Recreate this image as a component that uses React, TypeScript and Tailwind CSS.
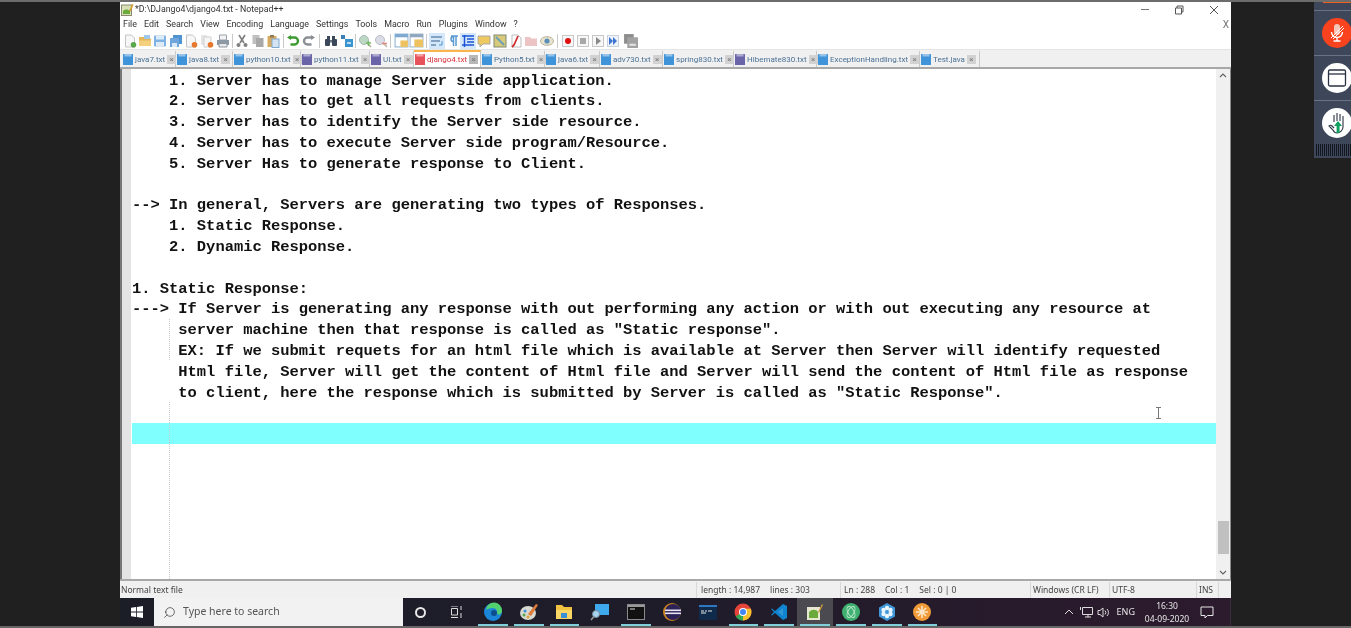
import type { ReactNode } from 'react'
import { Search } from 'lucide-react'

const MENUS = ['File', 'Edit', 'Search', 'View', 'Encoding', 'Language', 'Settings', 'Tools', 'Macro', 'Run', 'Plugins', 'Window', '?']

const TABS = [
  { name: 'java7.txt', w: 'w-[54px]', color: '#3f93d8' },
  { name: 'java8.txt', w: 'w-[57px]', color: '#3f93d8' },
  { name: 'python10.txt', w: 'w-[68px]', color: '#3f93d8' },
  { name: 'python11.txt', w: 'w-[69px]', color: '#6a64a8' },
  { name: 'UI.txt', w: 'w-[44px]', color: '#6a64a8' },
  { name: 'django4.txt', w: 'w-[67px]', color: '#e8525a', active: true },
  { name: 'Python5.txt', w: 'w-[64px]', color: '#3f93d8' },
  { name: 'java6.txt', w: 'w-[55px]', color: '#3f93d8' },
  { name: 'adv730.txt', w: 'w-[63px]', color: '#3f93d8' },
  { name: 'spring830.txt', w: 'w-[71px]', color: '#3f93d8' },
  { name: 'Hibernate830.txt', w: 'w-[83px]', color: '#6a64a8' },
  { name: 'ExceptionHandling.txt', w: 'w-[103px]', color: '#3f93d8' },
  { name: 'Test.java', w: 'w-[60px]', color: '#3f93d8' },
]

const LINES = [
  '    1. Server has to manage Server side application.',
  '    2. Server has to get all requests from clients.',
  '    3. Server has to identify the Server side resource.',
  '    4. Server has to execute Server side program/Resource.',
  '    5. Server Has to generate response to Client.',
  '',
  '--> In general, Servers are generating two types of Responses.',
  '    1. Static Response.',
  '    2. Dynamic Response.',
  '',
  '1. Static Response:',
  '---> If Server is generating any response with out performing any action or with out executing any resource at',
  '     server machine then that response is called as "Static response".',
  '     EX: If we submit requets for an html file which is available at Server then Server will identify requested',
  '     Html file, Server will get the content of Html file and Server will send the content of Html file as response',
  '     to client, here the response which is submitted by Server is called as "Static Response".',
  '',
]

function Ico({ children, size = 14 }: { children: ReactNode; size?: number }) {
  return (
    <svg width={size} height={size} viewBox="0 0 14 14" className="shrink-0">
      {children}
    </svg>
  )
}

const Doc = ({ badge }: { badge?: string }) => (
  <>
    <path d="M2.5 1h6l3 3v9h-9z" fill="#f7f7f7" stroke="#c4c4c4" />
    {badge && <circle cx="10.5" cy="10.8" r="2.8" fill={badge} />}
  </>
)

const Floppy = ({ x = 1, c = '#7fb2e4' }: { x?: number; c?: string }) => (
  <>
    <rect x={x} y="1.5" width="12" height="11" rx="1" fill={c} />
    <rect x={x + 2} y="1.5" width="8" height="4" fill="#dcebf8" />
    <rect x={x + 2} y="8" width="8" height="4.5" fill="#ffffff" opacity="0.75" />
  </>
)

const TOOLBAR: Record<string, ReactNode> = {
  new: <Ico><Doc badge="#58a84a" /></Ico>,
  open: <Ico><path d="M1 3h5l1 1.5h6V12H1z" fill="#e7b85a" /><path d="M6 1h6v4H6z" fill="#9cc6ea" /><path d="M1 6.5h12V12H1z" fill="#f3cf7e" /></Ico>,
  save: <Ico><Floppy /></Ico>,
  saveAll: <Ico><rect x="4" y="1" width="9" height="9" fill="#4f93d0" /><rect x="1" y="4" width="9" height="9" fill="#6ea6dc" /><rect x="3" y="9" width="5" height="4" fill="#dbe9f6" /></Ico>,
  close: <Ico><Doc badge="#e8772e" /></Ico>,
  closeAll: <Ico><path d="M1 1h6v10H1z" fill="#e5e5e5" /><path d="M4 3h7v10H4z" fill="#f6f6f6" stroke="#cfcfcf" /><circle cx="10.5" cy="10.8" r="2.8" fill="#e8772e" /></Ico>,
  print: <Ico><path d="M3.5 1h7v5h-7z" fill="#f3f3f3" stroke="#9aa3ad" /><path d="M1 6h12v5H1z" fill="#8d98a5" /><path d="M3 9.5h8V13H3z" fill="#e8e8e8" stroke="#8d98a5" /></Ico>,
  cut: <Ico><path d="M4 1l5 8M10 1L5 9" stroke="#808080" strokeWidth="1.7" fill="none" /><circle cx="3.5" cy="11" r="2" fill="#808080" /><circle cx="10.5" cy="11" r="2" fill="#808080" /></Ico>,
  copy: <Ico><rect x="1.5" y="1" width="7" height="9" fill="#c0c0c0" /><rect x="5" y="4" width="7.5" height="9" fill="#a8a8a8" /></Ico>,
  paste: <Ico><rect x="1.5" y="2" width="9" height="11" fill="#d8ab62" /><rect x="4" y="1" width="4" height="2.5" fill="#8f7a55" /><rect x="6" y="5" width="7" height="8.5" fill="#d5e4f3" stroke="#7fa8cf" /></Ico>,
  undo: <Ico><path d="M3 3.5h5.5a3 3 0 0 1 0 7H4.5" fill="none" stroke="#3d9a32" strokeWidth="2.4" /><path d="M5 1v5L1 3.5z" fill="#3d9a32" /></Ico>,
  redo: <Ico><path d="M11 3.5H5.5a3 3 0 0 0 0 7h4" fill="none" stroke="#8a8f94" strokeWidth="2.4" /><path d="M9 1v5l4-2.5z" fill="#8a8f94" /></Ico>,
  find: <Ico><rect x="1" y="5" width="5" height="7" rx="1" fill="#3a4859" /><rect x="8" y="5" width="5" height="7" rx="1" fill="#3a4859" /><rect x="3" y="2" width="3" height="4" fill="#3a4859" /><rect x="8" y="2" width="3" height="4" fill="#3a4859" /><rect x="6" y="6" width="2" height="2.5" fill="#6a7786" /></Ico>,
  replace: <Ico><path d="M1 1h4v4H1z" fill="#3b7fb8" /><path d="M5 5h8v8H5z" fill="#3a94cf" /><path d="M7 8h4v2H7z" fill="#b9dcf3" /></Ico>,
  zoomIn: <Ico><circle cx="6" cy="6" r="4.5" fill="#bcd8c4" stroke="#a8bdb8" /><path d="M9 9l4 4" stroke="#a8ab90" strokeWidth="1.5" /><path d="M8 9h5M10.5 7v5" stroke="#74b868" strokeWidth="1.4" /></Ico>,
  zoomOut: <Ico><circle cx="6" cy="6" r="4.5" fill="#dcdce6" stroke="#bcbcc8" /><path d="M9 9l4 4" stroke="#bcb2a5" strokeWidth="1.5" /><path d="M8 9.5h5" stroke="#e0857a" strokeWidth="1.6" /></Ico>,
  sync1: <Ico size={15}><rect x="1" y="1" width="12" height="12" fill="#fff" stroke="#8eb2d2" /><rect x="1" y="1" width="12" height="3" fill="#7eaad2" /><rect x="6" y="7" width="7" height="6" fill="#eec25f" /></Ico>,
  sync2: <Ico size={15}><rect x="1" y="1" width="12" height="12" fill="#fff" stroke="#9fb5c8" /><rect x="1" y="1" width="12" height="3" fill="#8fa8bf" /><rect x="5" y="6" width="8" height="7" fill="#eec25f" /></Ico>,
  wrap: <Ico><path d="M1 3h11M1 7h9M1 11h5" stroke="#6a8cb0" strokeWidth="1.6" fill="none" /><path d="M12 7v4H9" stroke="#4f93d0" fill="none" /></Ico>,
  para: <Ico><path d="M5 2h7M7.5 2v10M10 2v10M7.5 2.5a2.4 2.4 0 0 0 0 5" stroke="#5a9ad2" strokeWidth="1.5" fill="none" /></Ico>,
  indent: <Ico><path d="M1 2h12M6 5h7M6 8h7M1 11h12" stroke="#1b54d6" strokeWidth="1.3" /><path d="M3.5 1v12" stroke="#1b54d6" strokeWidth="1.5" /></Ico>,
  note: <Ico><path d="M1 2h12v8H6l-3 3v-3H1z" fill="#f0c860" stroke="#a9a9a9" /></Ico>,
  map: <Ico><rect x="1" y="1" width="12" height="12" fill="#d9c97b" stroke="#7e8a70" /><path d="M3 3l8 8" stroke="#6ca0b8" strokeWidth="2" /></Ico>,
  fn: <Ico><path d="M3 1h6l3 3v9H3z" fill="#fff" stroke="#bdbdbd" /><path d="M9 2L5 11l-2 2" stroke="#cf3030" strokeWidth="1.8" fill="none" /></Ico>,
  folder: <Ico><path d="M1 3h5l1 1.5h6V12H1z" fill="#ecc4c4" /></Ico>,
  eye: <Ico><ellipse cx="7" cy="7" rx="6.5" ry="4.3" fill="#e9e4cf" stroke="#b8b09a" /><circle cx="7" cy="7" r="2.6" fill="#5a8fb8" /></Ico>,
  rec: <Ico><rect x="1.5" y="1.5" width="11" height="11" fill="#f7f7f7" stroke="#c8c8c8" /><circle cx="7" cy="7" r="3" fill="#e01010" /></Ico>,
  stop: <Ico><rect x="1.5" y="1.5" width="11" height="11" fill="#f7f7f7" stroke="#c8c8c8" /><rect x="4" y="4" width="6" height="6" fill="#a8a8a8" /></Ico>,
  play: <Ico><rect x="1.5" y="1.5" width="11" height="11" fill="#f7f7f7" stroke="#c8c8c8" /><path d="M5 3l5 4-5 4z" fill="#8a8a8a" /></Ico>,
  playN: <Ico><rect x="1.5" y="1.5" width="11" height="11" fill="#eef3fa" stroke="#c8d2e0" /><path d="M3 3l4 4-4 4zM7 3l4 4-4 4z" fill="#3d74d0" /></Ico>,
  saveMacro: <Ico size={15}><rect x="1" y="1" width="9" height="9" fill="#8d8d8d" /><rect x="4" y="4" width="10" height="10" fill="#a2a2a2" /><rect x="6" y="10" width="6" height="2" fill="#e2e2e2" /></Ico>,
}

// sep entries are thin dividers with the margin written out, on = pressed state with a pale blue box
type ToolItem = { id: string; w: string; on?: boolean } | { sep: string }

const TOOLBAR_ROW: ToolItem[] = [
  { id: 'new', w: 'w-[15px]' }, { id: 'open', w: 'w-[15px]' }, { id: 'save', w: 'w-[16px]' }, { id: 'saveAll', w: 'w-[15px]' },
  { id: 'close', w: 'w-[16px]' }, { id: 'closeAll', w: 'w-[16px]' }, { id: 'print', w: 'w-[15px]' }, { sep: 'mx-[1.5px]' },
  { id: 'cut', w: 'w-[16px]' }, { id: 'copy', w: 'w-[15px]' }, { id: 'paste', w: 'w-[16px]' }, { sep: 'mx-[1.5px]' },
  { id: 'undo', w: 'w-[16px]' }, { id: 'redo', w: 'w-[15px]' }, { sep: 'mx-[3px]' },
  { id: 'find', w: 'w-[16px]' }, { id: 'replace', w: 'w-[15px]' }, { sep: 'mx-[1px]' },
  { id: 'zoomIn', w: 'w-[16px]' }, { id: 'zoomOut', w: 'w-[15px]' }, { sep: 'mx-[2px]' },
  { id: 'sync1', w: 'w-[16px]' }, { id: 'sync2', w: 'w-[15px]' }, { sep: 'mx-[2px]' },
  { id: 'wrap', w: 'w-[16px]', on: true }, { id: 'para', w: 'w-[15px]' }, { id: 'indent', w: 'w-[16px]', on: true },
  { id: 'note', w: 'w-[16px]' }, { id: 'map', w: 'w-[16px]' }, { id: 'fn', w: 'w-[15px]' }, { id: 'folder', w: 'w-[16px]' }, { id: 'eye', w: 'w-[16px]' }, { sep: 'mx-[2px]' },
  { id: 'rec', w: 'w-[15px]' }, { id: 'stop', w: 'w-[15px]' }, { id: 'play', w: 'w-[15px]' }, { id: 'playN', w: 'w-[16px]' }, { id: 'saveMacro', w: 'w-[18px]' },
]

const TASK_ICONS: { id: string; open: boolean }[] = [
  { id: 'edge', open: true }, { id: 'paint', open: true }, { id: 'files', open: true }, { id: 'search', open: false },
  { id: 'term', open: true }, { id: 'eclipse', open: false }, { id: 'cmd', open: false }, { id: 'chrome', open: true },
  { id: 'vscode', open: true }, { id: 'npp', open: true }, { id: 'atom', open: true }, { id: 'snow', open: true }, { id: 'orange', open: true },
]

function TaskGlyph({ id }: { id: string }) {
  switch (id) {
    case 'edge':
      return (
        <svg width="20" height="20" viewBox="0 0 20 20">
          <circle cx="10" cy="10" r="9" fill="#1b86d8" />
          <path d="M3 8a8 8 0 0 1 16 1c0 3-3 4-5 3 1-3-1-6-4-6S4 7 3 8z" fill="#53d06f" />
          <circle cx="11" cy="11" r="3" fill="#0d4f8c" />
        </svg>
      )
    case 'paint':
      return (
        <svg width="20" height="20" viewBox="0 0 20 20">
          <ellipse cx="9" cy="11" rx="8" ry="7" fill="#d8d8d0" />
          <circle cx="6" cy="9" r="1.5" fill="#3a8fd8" />
          <circle cx="5" cy="13" r="1.5" fill="#58a84a" />
          <circle cx="9" cy="15" r="1.4" fill="#e0a030" />
          <path d="M9 12L17 2l2 1-7 11z" fill="#e07a38" />
        </svg>
      )
    case 'files':
      return (
        <svg width="18" height="18" viewBox="0 0 18 18">
          <path d="M1 2h6l2 2h8v12H1z" fill="#f2c243" />
          <rect x="1" y="7" width="16" height="9" fill="#fbd768" />
          <rect x="6" y="10" width="6" height="5" fill="#3a8fd8" />
        </svg>
      )
    case 'search':
      return (
        <svg width="20" height="20" viewBox="0 0 20 20">
          <rect x="5" y="2" width="14" height="11" fill="#3fa9ee" />
          <circle cx="6" cy="12" r="3.5" fill="#a8d4f0" stroke="#7a8a98" />
          <path d="M3.5 15L1 18" stroke="#9a9a9a" strokeWidth="1.5" />
        </svg>
      )
    case 'term':
      return (
        <svg width="18" height="16" viewBox="0 0 18 16">
          <rect x="0.5" y="0.5" width="17" height="15" fill="#111" stroke="#8a8a8a" />
          <rect x="1" y="1" width="16" height="2" fill="#999" />
          <path d="M3 5h5" stroke="#ddd" />
        </svg>
      )
    case 'eclipse':
      return (
        <svg width="20" height="20" viewBox="0 0 20 20">
          <circle cx="10" cy="10" r="9" fill="#c9841f" />
          <circle cx="11" cy="10" r="8" fill="#2c2255" />
          <rect x="3" y="7.5" width="16" height="1.6" fill="#e8e4f4" />
          <rect x="3" y="10.5" width="16" height="1.6" fill="#e8e4f4" />
        </svg>
      )
    case 'cmd':
      return (
        <svg width="18" height="15" viewBox="0 0 18 15">
          <rect width="18" height="15" fill="#0f2a4a" />
          <rect width="18" height="2" fill="#2f78c0" />
          <path d="M2 6h3M6 6h2M9 6h4M2 8h5" stroke="#e8e8e8" />
        </svg>
      )
    case 'chrome':
      return (
        <svg width="18" height="18" viewBox="0 0 18 18">
          <circle cx="9" cy="9" r="8.5" fill="#e5443a" />
          <path d="M9 9L1.7 13.3A8.5 8.5 0 0 0 9 17.5z" fill="#34a853" />
          <path d="M9 17.5a8.5 8.5 0 0 0 7.8-11.8H9z" fill="#f5c02e" />
          <circle cx="9" cy="9" r="4" fill="#fff" />
          <circle cx="9" cy="9" r="3" fill="#4285f4" />
        </svg>
      )
    case 'vscode':
      return (
        <svg width="18" height="18" viewBox="0 0 18 18">
          <path d="M13 1l4 2v12l-4 2-8-7-3 2.5L1 12l3-3-3-3 1-.5L5 8z" fill="#0f84d0" />
          <path d="M13 5L8 9l5 4z" fill="#fff" opacity="0.15" />
        </svg>
      )
    case 'npp':
      return (
        <svg width="18" height="18" viewBox="0 0 18 18">
          <rect x="1" y="4" width="13" height="13" fill="#e8e8d0" />
          <path d="M3 9c3-3 7-3 9 0v6H3z" fill="#6aaa3a" />
          <path d="M12 9l4-8 1 1-4 8z" fill="#c89a3a" />
        </svg>
      )
    case 'atom':
      return (
        <svg width="18" height="18" viewBox="0 0 18 18">
          <circle cx="9" cy="9" r="9" fill="#3fb070" />
          <ellipse cx="9" cy="9" rx="6" ry="3" fill="none" stroke="#bde8cf" transform="rotate(60 9 9)" />
          <ellipse cx="9" cy="9" rx="6" ry="3" fill="none" stroke="#bde8cf" transform="rotate(-60 9 9)" />
        </svg>
      )
    case 'snow':
      return (
        <svg width="18" height="18" viewBox="0 0 18 18">
          <path d="M9 0l8 4.5v9L9 18l-8-4.5v-9z" fill="#3f96d8" />
          <circle cx="9" cy="5" r="2.2" fill="#eaf5fc" />
          <circle cx="9" cy="13" r="2.2" fill="#eaf5fc" />
          <circle cx="5.5" cy="7" r="2.2" fill="#eaf5fc" />
          <circle cx="12.5" cy="7" r="2.2" fill="#eaf5fc" />
          <circle cx="5.5" cy="11" r="2.2" fill="#eaf5fc" />
          <circle cx="12.5" cy="11" r="2.2" fill="#eaf5fc" />
        </svg>
      )
    default:
      return (
        <svg width="18" height="18" viewBox="0 0 18 18">
          <circle cx="9" cy="9" r="9" fill="#f09a38" />
          <path d="M9 3v12M3 9h12M5 5l8 8M13 5l-8 8" stroke="#fde6c8" strokeWidth="1.6" />
        </svg>
      )
  }
}

function FileIcon({ color }: { color: string }) {
  return (
    <svg width="10" height="11" viewBox="0 0 10 11" className="shrink-0">
      <rect width="10" height="11" rx="0.5" fill={color} />
      <rect x="1.5" y="0" width="7" height="2.5" fill="#ffffff" opacity="0.45" />
    </svg>
  )
}

export default function App() {
  return (
    <div className="relative flex h-[628px] w-[1351px] flex-col overflow-hidden border-t-2 border-b-2 border-t-[#6c6c6c] border-b-[#666666] bg-[#202020] pl-[120px] font-['Noto_Sans',sans-serif] blur-[0.35px]">
      <div className="flex h-full w-[1111px] flex-col bg-white">
        {/* title bar */}
        <div className="flex h-[15px] items-center pl-[1px] font-['Roboto',sans-serif] text-[8.8px] text-[#333333]">
          <svg width="13" height="13" viewBox="0 0 13 13">
            <rect x="0.5" y="2" width="10" height="10.5" fill="#d8e0b8" stroke="#8a8a70" />
            <path d="M2 8c2-2 5-2 7 0v3H2z" fill="#6aaa3a" />
            <path d="M8 8l3-7 1.5.7-3 7z" fill="#d8a030" />
          </svg>
          <span className="ml-[1px]">*D:\DJango4\django4.txt - Notepad++</span>
          <div className="ml-auto flex items-center">
            <span className="h-px w-[8px] bg-[#777777]" />
            <svg width="10" height="10" viewBox="0 0 10 10" className="ml-[25px]">
              <path d="M1.5 3h6v6h-6zM3 3V1h6v6H7.5" fill="none" stroke="#555555" />
            </svg>
            <svg width="10" height="10" viewBox="0 0 10 10" className="ml-[25px] mr-[12px]">
              <path d="M1 1l8 8M9 1l-8 8" stroke="#555555" />
            </svg>
          </div>
        </div>

        {/* menu bar */}
        <div className="flex h-[15px] items-center gap-[7px] pl-[3px] font-['Roboto',sans-serif] text-[8.9px] text-[#333333]">
          {MENUS.map(m => (
            <span key={m}>{m}</span>
          ))}
          <span className="ml-auto mr-[2px] text-[10px] text-[#777777]">X</span>
        </div>

        {/* toolbar */}
        <div className="flex h-[17px] items-center pl-[2px]">
          {TOOLBAR_ROW.map((item, i) =>
            'sep' in item ? (
              <span key={i} className={`h-[14px] w-px bg-[#c8c8c8] ${item.sep}`} />
            ) : (
              <span key={i} className={`flex h-[16px] items-center justify-center ${item.w} ${item.on ? 'bg-[#d5e8fa]' : ''}`}>
                {TOOLBAR[item.id]}
              </span>
            ),
          )}
        </div>

        {/* tabs */}
        <div className="flex h-[20px] items-end border-t border-[#e4e4e4] border-b-2 border-b-[#a8a8a8] bg-[#f0f0f0] pl-[2px] font-['Roboto',sans-serif] text-[8px]">
          {TABS.map(t => (
            <div
              key={t.name}
              className={`flex h-[17px] items-center gap-[2px] border-t-2 border-r border-r-[#c8c8c8] pl-[1px] ${t.w} ${t.active ? 'border-t-[#fab44c] bg-white text-[#d8303a]' : 'border-t-transparent text-[#4a7196]'}`}
            >
              <FileIcon color={t.color} />
              <span className="whitespace-nowrap">{t.name}</span>
              <span className={`mr-[3px] ml-auto flex h-[9px] w-[9px] shrink-0 items-center justify-center text-[8px] leading-none text-[#777777] ${t.active ? 'bg-[#b8b8b8]' : 'bg-[#d2d2d2]'}`}>×</span>
            </div>
          ))}
        </div>

        {/* editor */}
        <div className="flex min-h-0 flex-1 border-b-2 border-b-[#a8a8a8]">
          <div className="w-[11px] border-l-2 border-l-[#777777] bg-[#e4e4e4]" />
          <div className="relative ml-px flex-1 overflow-hidden pt-[0.6px] font-['Liberation_Mono',monospace] text-[15.45px] leading-[23.4px] font-bold text-[#111111]">
            {LINES.map((line, i) => (
              <div key={i} className="h-[20.8px] whitespace-pre">
                {line}
              </div>
            ))}
            <div className="h-[20.8px] bg-[#80ffff]" />

            {/* indent guides */}
            <span className="absolute top-[250px] left-[37px] h-[41px] border-l border-dotted border-[#cccccc]" />
            <span className="absolute top-[333px] left-[37px] bottom-0 border-l border-dotted border-[#cccccc]" />
            {/* mouse cursor */}
            <svg width="7" height="12" viewBox="0 0 7 12" className="absolute top-[338px] left-[1023px]">
              <path d="M1 .5h5M1 11.5h5M3.5 .5v11" stroke="#777777" fill="none" />
            </svg>
          </div>
          <div className="flex w-[15px] flex-col items-center justify-between border-r border-r-[#8a8a8a] bg-[#f0f0f0] py-[4px]">
            <svg width="8" height="5" viewBox="0 0 8 5">
              <path d="M1 4l3-3 3 3" fill="none" stroke="#666666" strokeWidth="1.2" />
            </svg>
            <div className="mt-auto mb-[16px] h-[33px] w-[11px] bg-[#c0c0c0]" />
            <svg width="8" height="5" viewBox="0 0 8 5">
              <path d="M1 1l3 3 3-3" fill="none" stroke="#666666" strokeWidth="1.2" />
            </svg>
          </div>
        </div>

        {/* status bar */}
        <div className="flex h-[17px] items-center bg-[#f0f0f0] pt-[1px] text-[8.5px] text-[#444444]">
          <span className="w-[576px] pl-[1px]">Normal text file</span>
          <span className="flex h-full w-[144px] items-center gap-[10px] border-l border-[#d8d8d8] pl-[4px]">
            <span>length : 14,987</span>
            <span>lines : 303</span>
          </span>
          <span className="flex h-full w-[190px] items-center gap-[10px] border-l border-[#d8d8d8] pl-[3px]">
            <span>Ln : 288</span>
            <span>Col : 1</span>
            <span>Sel : 0 | 0</span>
          </span>
          <span className="flex h-full w-[79px] items-center border-l border-[#d8d8d8] pl-[2px]">Windows (CR LF)</span>
          <span className="flex h-full w-[87px] items-center border-l border-[#d8d8d8] pl-[2px]">UTF-8</span>
          <span className="flex h-full w-[23px] items-center border-r border-l border-[#d8d8d8] pl-[2px]">INS</span>
        </div>

        {/* taskbar */}
        <div className="flex h-[28px] items-center bg-gradient-to-r from-[#1b1d27] via-[#1f1c2a] to-[#2c1a2d] text-[#e6e6e6]">
          <div className="flex h-full w-[34px] items-center justify-center">
            <svg width="12" height="12" viewBox="0 0 12 12">
              <path d="M0 1.7l5-.7v4.6H0zM5.8.9L12 0v5.6H5.8zM0 6.4h5V11l-5-.7zM5.8 6.4H12V12l-6.2-.9z" fill="#ffffff" />
            </svg>
          </div>
          <div className="flex h-full w-[249px] items-center gap-[6px] bg-[#f2f2f2] pl-[9px] text-[10.5px] text-[#555555]">
            <Search size={13} strokeWidth={1.3} className="-scale-x-100 text-[#333333]" />
            <span className="ml-[1px]">Type here to search</span>
          </div>
          <div className="flex h-full w-[35px] items-center justify-center">
            <span className="h-[11px] w-[11px] rounded-full border-2 border-[#e8e8e8]" />
          </div>
          <div className="flex h-full w-[37px] items-center justify-center">
            <svg width="13" height="12" viewBox="0 0 13 12">
              <path d="M1 0h7M1 11.5h7M1.5 2.5h6v6.5h-6zM11 0v4M11 7v5" fill="none" stroke="#dcdcdc" />
            </svg>
          </div>
          {TASK_ICONS.map(t => (
            <div
              key={t.id}
              className={`relative flex h-full w-[35.8px] items-center justify-center ${t.id === 'npp' ? 'bg-[#4a4a50]' : ''}`}
            >
              <TaskGlyph id={t.id} />
              {t.open && <span className="absolute right-[3px] bottom-0 left-[3px] h-[2px] bg-[#7fd0d8]" />}
            </div>
          ))}
          <div className="ml-auto flex h-full items-center border-r border-[#3a2a3c]">
            <svg width="10" height="6" viewBox="0 0 10 6">
              <path d="M1 5l4-4 4 4" fill="none" stroke="#dcdcdc" />
            </svg>
            <svg width="13" height="12" viewBox="0 0 13 12" className="ml-[6px]">
              <path d="M2.5 1.5h10v7h-10zM5 11h6M8 8.5V11M.5 1v3" fill="none" stroke="#dcdcdc" />
            </svg>
            <svg width="13" height="11" viewBox="0 0 13 11" className="ml-[4px]">
              <path d="M1 3.5h2L6 1v9L3 7.5H1zM8 3.5a3 3 0 0 1 0 4M10 2a5 5 0 0 1 0 7" fill="none" stroke="#dcdcdc" />
            </svg>
            <span className="ml-[7px] text-[9px]">ENG</span>
            <span className="ml-[9px] flex w-[46px] flex-col items-center text-[8.5px] leading-[13px]">
              <span>16:30</span>
              <span>04-09-2020</span>
            </span>
            <svg width="14" height="13" viewBox="0 0 14 13" className="ml-[10px] mr-[16px]">
              <path d="M1 1h12v8.5H7.5L5 12V9.5H1z" fill="none" stroke="#e6e6e6" />
            </svg>
          </div>
        </div>
      </div>

      {/* meeting side panel, sits over the captured screen */}
      <div className="absolute top-[-2px] right-0 flex h-[158px] w-[37px] flex-col bg-[#3e4759]">
        <div className="ml-[9px] h-[3px] bg-[#f0601e]" />
        <div className="mt-[7px] flex h-[45px] items-center border-t border-[#6a7384] pl-[8px]">
          <span className="flex h-[30px] w-[30px] shrink-0 items-center justify-center rounded-full bg-[#f8431e]">
            <svg width="18" height="20" viewBox="0 0 18 20">
              <rect x="6" y="1" width="6" height="11" rx="3" fill="#f6c6b8" />
              <path d="M3.5 9a5.5 5.5 0 0 0 11 0M9 14.5V18M5.5 18h7" fill="none" stroke="#ffffff" strokeWidth="1.4" />
              <path d="M3 15L15 3M5 16L16 5" stroke="#ffffff" strokeWidth="1" />
            </svg>
          </span>
        </div>
        <div className="flex h-[45px] items-center border-t border-[#6a7384] pl-[8px]">
          <span className="flex h-[30px] w-[30px] shrink-0 items-center justify-center rounded-full bg-white">
            <svg width="20" height="20" viewBox="0 0 20 20">
              <rect x="1.5" y="2" width="17" height="16" rx="1.5" fill="none" stroke="#2a3142" strokeWidth="1.3" />
              <path d="M1.5 6h17" stroke="#2a3142" strokeWidth="1.3" />
            </svg>
          </span>
        </div>
        <div className="flex h-[44px] items-center border-t border-[#6a7384] pl-[8px]">
          <span className="flex h-[30px] w-[30px] shrink-0 items-center justify-center rounded-full bg-white">
            <svg width="24" height="24" viewBox="0 0 24 24">
              <path d="M9 11V4M12 10V2M15 10V3M18 11V5M18 11v5c0 3-3 6-6 6-2 0-3-1-4-3l-4-4c1-1 2-1 3 0l2 2" fill="none" stroke="#2a3142" strokeWidth="1.1" />
              <path d="M13 10l-4 5h2.6v7h3v-7H17z" fill="#0fa060" />
            </svg>
          </span>
        </div>
        <div className="ml-[2px] h-[12px] bg-[repeating-linear-gradient(90deg,#12161f_0,#12161f_1px,#3e4759_1px,#3e4759_2px)]" />
      </div>
    </div>
  )
}
